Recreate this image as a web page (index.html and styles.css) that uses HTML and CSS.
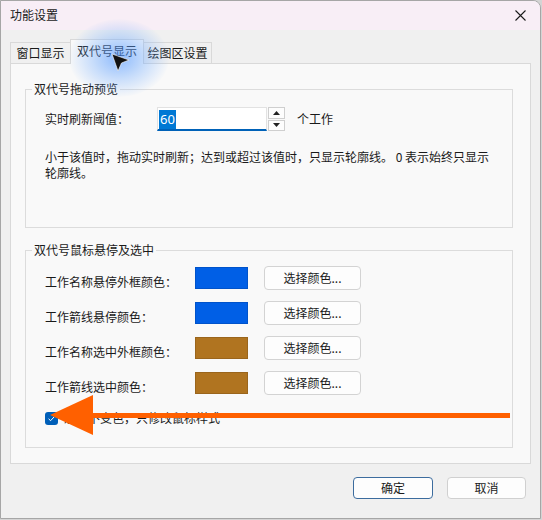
FILE: index.html
```html
<!DOCTYPE html>
<html lang="zh-CN">
<head>
<meta charset="utf-8">
<title>功能设置</title>
<link rel="stylesheet" href="styles.css">
</head>
<body>
<div class="window">
  <div class="titlebar">
    <span class="title">功能设置</span>
    <svg class="close" width="11" height="11" viewBox="0 0 11 11"><path d="M0.5 0.5 L10.5 10.5 M10.5 0.5 L0.5 10.5" stroke="#1a1a1a" stroke-width="1.1" fill="none"/></svg>
  </div>
  <div class="tabs">
    <div class="tab t1">窗口显示</div>
    <div class="tab t2 active">双代号显示</div>
    <div class="tab t3">绘图区设置</div>
  </div>
  <div class="panel">
    <fieldset class="group g1">
      <legend>双代号拖动预览</legend>
      <div class="row-threshold">
        <span class="lbl-threshold">实时刷新阈值：</span>
        <div class="input"><span class="sel">60</span></div>
        <div class="spin">
          <div class="spin-btn"><svg width="7" height="4" viewBox="0 0 7 4"><path d="M3.5 0 L7 4 L0 4Z" fill="#222"/></svg></div>
          <div class="spin-btn"><svg width="7" height="4" viewBox="0 0 7 4"><path d="M0 0 L7 0 L3.5 4Z" fill="#222"/></svg></div>
        </div>
        <span class="unit">个工作</span>
      </div>
      <p class="desc">小于该值时，拖动实时刷新；达到或超过该值时，只显示轮廓线。 0 表示始终只显示轮廓线。</p>
    </fieldset>
    <fieldset class="group g2">
      <legend>双代号鼠标悬停及选中</legend>
      <div class="rows">
        <div class="crow"><span class="clbl">工作名称悬停外框颜色：</span><span class="swatch blue"></span><button class="pick">选择颜色...</button></div>
        <div class="crow"><span class="clbl">工作箭线悬停颜色：</span><span class="swatch blue"></span><button class="pick">选择颜色...</button></div>
        <div class="crow"><span class="clbl">工作名称选中外框颜色：</span><span class="swatch brown"></span><button class="pick">选择颜色...</button></div>
        <div class="crow"><span class="clbl">工作箭线选中颜色：</span><span class="swatch brown"></span><button class="pick">选择颜色...</button></div>
      </div>
      <div class="chkrow">
        <span class="chk"><svg width="13" height="13" viewBox="0 0 13 13"><path d="M3.6 6.8 L5.6 8.7 L9.4 4.6" stroke="#fff" stroke-width="1" fill="none"/></svg></span>
        <span class="chktext">悬停不变色，只修改鼠标样式</span>
      </div>
    </fieldset>
  </div>
  <div class="footer">
    <button class="btn primary">确定</button>
    <button class="btn">取消</button>
  </div>
  <div class="glow"></div>
  <svg class="overlay" width="541" height="519" viewBox="0 0 541 519">
    <path d="M112 54 L129 60 L121.5 63 L118 71 Z" fill="#111" stroke="#fff" stroke-width="0.6"/>
    <rect x="88" y="413" width="422" height="5" fill="#ff6000"/>
    <path d="M50 415 L93 395 L93 435 Z" fill="#ff6000"/>
  </svg>
</div>
</body>
</html>
```

FILE: styles.css
```css
html, body {
  margin: 0;
  padding: 0;
}
body {
  width: 542px;
  height: 520px;
  background: #d4d4d4;
  font-family: "Noto Sans CJK SC", "Noto Sans", sans-serif;
  font-size: 12px;
  line-height: 16px;
  color: #1a1a1a;
}
.window {
  position: relative;
  box-sizing: border-box;
  width: 541px;
  height: 519px;
  border: 1px solid #a6a6a6;
  border-radius: 0 8px 0 0;
  background: #f0f0f0;
  display: flex;
  flex-direction: column;
  overflow: hidden;
}
.titlebar {
  height: 29px;
  flex: none;
  background: #f8eef6;
  display: flex;
  align-items: center;
  justify-content: space-between;
  padding: 0 14px 1px 9px;
  box-sizing: border-box;
}
.tabs {
  display: flex;
  align-items: flex-end;
  margin-top: 9px;
  padding-left: 9px;
  height: 24px;
  flex: none;
}
.tab {
  box-sizing: border-box;
  height: 21px;
  border: 1px solid #d9d9d9;
  border-bottom: none;
  background: #f0f0f0;
  display: flex;
  align-items: center;
  justify-content: center;
}
.t1 { width: 60px; border-right: none; }
.t2 { width: 74px; }
.t3 { width: 68px; border-left: none; }
.tab.active {
  height: 25px;
  margin-bottom: -1px;
  background: #f9f9f9;
  position: relative;
  z-index: 1;
  padding-bottom: 2px;
}
.panel {
  box-sizing: border-box;
  margin: 0 9px;
  height: 401px;
  flex: none;
  border: 1px solid #d9d9d9;
  background: #f9f9f9;
  padding-top: 17px;
}
.group {
  box-sizing: border-box;
  margin: 0 17px 0 14px;
  padding: 0 0 0 19px;
  border: 1px solid #dcdcdc;
  min-width: 0;
}
.group legend {
  padding: 0 2px;
  margin-left: -13px;
  line-height: 16px;
}
.g1 { height: 147px; }
.g2 { height: 206px; margin-top: 14px; }
.row-threshold {
  display: flex;
  align-items: center;
  margin-top: 10px;
  height: 24px;
}
.lbl-threshold { width: 112px; }
.input {
  box-sizing: border-box;
  width: 110px;
  height: 24px;
  background: #fff;
  border: 1px solid #e2e2e2;
  border-bottom: 2px solid #0062b8;
  padding: 1px 0 0 1px;
  display: flex;
  align-items: center;
}
.sel {
  background: #0078d4;
  color: #fff;
  font-family: "Noto Sans", sans-serif;
  font-size: 13px;
  line-height: 19px;
  padding: 0 1px;
}
.spin {
  box-sizing: border-box;
  width: 17px;
  height: 24px;
  margin-left: 1px;
  display: flex;
  flex-direction: column;
  gap: 1px;
}
.spin-btn {
  flex: 1;
  border: 1px solid #cfcfcf;
  background: #fdfdfd;
  display: flex;
  align-items: center;
  justify-content: center;
}
.unit { margin-left: 12px; }
.desc {
  margin: 18px 0 0 0;
  width: 455px;
}
.rows {
  display: flex;
  flex-direction: column;
  gap: 11px;
  margin-top: 8px;
}
.crow {
  display: flex;
  align-items: center;
  height: 24px;
}
.clbl {
  width: 150px;
  margin-top: 7px;
}
.swatch {
  box-sizing: border-box;
  width: 53px;
  height: 22px;
  border: 1px solid rgba(0, 0, 0, 0.12);
}
.swatch.blue { background: #005fe6; }
.swatch.brown { background: #b07420; }
.pick {
  box-sizing: border-box;
  width: 97px;
  height: 24px;
  margin-left: 16px;
  border: 1px solid #d3d3d3;
  border-radius: 4px;
  background: #fdfdfd;
  font: inherit;
  color: inherit;
  padding: 0;
}
.chkrow {
  display: flex;
  align-items: center;
  margin-top: 15px;
  gap: 6px;
}
.chk {
  width: 13px;
  height: 13px;
  border-radius: 3px;
  background: #005fb8;
  display: block;
}
.chk svg { display: block; }
.footer {
  display: flex;
  justify-content: flex-end;
  gap: 14px;
  margin-top: 13px;
  padding-right: 14px;
}
.btn {
  box-sizing: border-box;
  width: 79px;
  height: 22px;
  border: 1px solid #d0d0d0;
  border-radius: 4px;
  background: #fdfdfd;
  font: inherit;
  color: inherit;
  padding: 0;
}
.btn.primary {
  width: 80px;
  border-color: #3c6c9e;
}
.glow {
  position: absolute;
  left: 68px;
  top: 18px;
  width: 100px;
  height: 78px;
  border-radius: 50%;
  background: radial-gradient(ellipse at center, rgba(70, 145, 255, 0.6) 0%, rgba(110, 170, 255, 0.35) 38%, rgba(160, 200, 255, 0) 72%);
  z-index: 2;
  pointer-events: none;
}
.overlay {
  position: absolute;
  left: -1px;
  top: -1px;
  z-index: 3;
  pointer-events: none;
}
```
